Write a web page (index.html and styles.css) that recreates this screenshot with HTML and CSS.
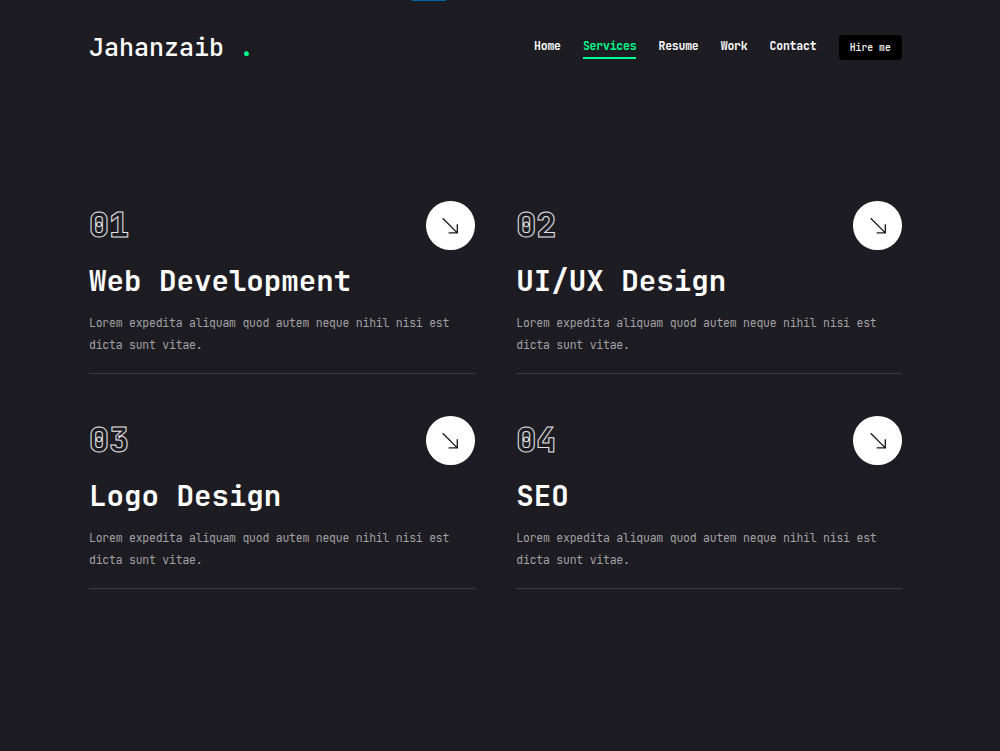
FILE: index.html
```html
<!DOCTYPE html>
<html lang="en">
<head>
<meta charset="utf-8">
<title>Services</title>
<link rel="stylesheet" href="styles.css">
</head>
<body>
<div class="loader"></div>
<header class="header">
  <h1 class="logo">Jahanzaib <span class="accent">.</span></h1>
  <nav class="nav">
    <a class="link">Home</a>
    <a class="link active">Services</a>
    <a class="link">Resume</a>
    <a class="link">Work</a>
    <a class="link">Contact</a>
    <button class="hire">Hire me</button>
  </nav>
</header>
<main class="services">
  <article class="card">
    <div class="top"><span class="num">01</span><a class="arrow"><svg viewBox="0 0 24 24"><path d="M4 3.5 20 19.5M20 10V19.5H10.5"/></svg></a></div>
    <h2 class="title">Web Development</h2>
    <p class="text">Lorem expedita aliquam quod autem neque nihil nisi est dicta sunt vitae.</p>
  </article>
  <article class="card">
    <div class="top"><span class="num">02</span><a class="arrow"><svg viewBox="0 0 24 24"><path d="M4 3.5 20 19.5M20 10V19.5H10.5"/></svg></a></div>
    <h2 class="title">UI/UX Design</h2>
    <p class="text">Lorem expedita aliquam quod autem neque nihil nisi est dicta sunt vitae.</p>
  </article>
  <article class="card">
    <div class="top"><span class="num">03</span><a class="arrow"><svg viewBox="0 0 24 24"><path d="M4 3.5 20 19.5M20 10V19.5H10.5"/></svg></a></div>
    <h2 class="title">Logo Design</h2>
    <p class="text">Lorem expedita aliquam quod autem neque nihil nisi est dicta sunt vitae.</p>
  </article>
  <article class="card">
    <div class="top"><span class="num">04</span><a class="arrow"><svg viewBox="0 0 24 24"><path d="M4 3.5 20 19.5M20 10V19.5H10.5"/></svg></a></div>
    <h2 class="title">SEO</h2>
    <p class="text">Lorem expedita aliquam quod autem neque nihil nisi est dicta sunt vitae.</p>
  </article>
</main>
</body>
</html>
```
FILE: styles.css
```css
* { box-sizing: border-box; margin: 0; }
body {
  background: #1d1c22;
  color: #fff;
  font-family: "JetBrains Mono", "DejaVu Sans Mono", monospace;
  height: 751px;
  overflow: hidden;
}
.loader { width: 34px; height: 1px; margin-left: 412px; background: #0563a8; }
.header {
  display: flex;
  justify-content: space-between;
  align-items: center;
  height: 93px;
  padding: 0 98px 0 89px;
}
.logo { padding-bottom: 1px; font-size: 25px; line-height: 36px; font-weight: 500; white-space: pre; }
.accent { color: #00ff8c; font-weight: 700; }
.nav { display: flex; align-items: center; gap: 22.2px; }
.link {
  margin-bottom: 1px;
  font-size: 11.5px;
  line-height: 22px;
  font-weight: 700;
  letter-spacing: -0.23px;
  border-bottom: 2px solid transparent;
}
.active { color: #00ff8c; border-bottom-color: #00ff8c; }
.hire {
  width: 63.5px;
  height: 25px;
  padding: 0;
  border: 0;
  border-radius: 4px;
  background: #000;
  color: #fff;
  font: 500 9.8px/25px "JetBrains Mono", "DejaVu Sans Mono", monospace;
}
.services {
  display: grid;
  grid-template-columns: 1fr 1fr;
  column-gap: 41.6px;
  row-gap: 42px;
  padding: 107px 98px 0 89px;
}
.card { height: 173px; border-bottom: 1px solid #3c3b41; }
.top { display: flex; justify-content: space-between; align-items: center; height: 49px; }
.num {
  padding-bottom: 1px;
  font-size: 33.3px;
  line-height: 48px;
  font-weight: 800;
  color: transparent;
  -webkit-text-stroke: 1px #e4e4e6;
}
.arrow {
  display: flex;
  align-items: center;
  justify-content: center;
  width: 48.6px;
  height: 48.6px;
  border-radius: 50%;
  background: #fff;
}
.arrow svg { width: 22px; height: 22px; fill: none; stroke: #1d1c22; stroke-width: 1.5; }
.title { margin-top: 14px; font-size: 29.15px; line-height: 34px; font-weight: 700; }
.text { margin-top: 14px; font-size: 11.5px; line-height: 22px; letter-spacing: -0.23px; color: #a2a1a4; }
```
